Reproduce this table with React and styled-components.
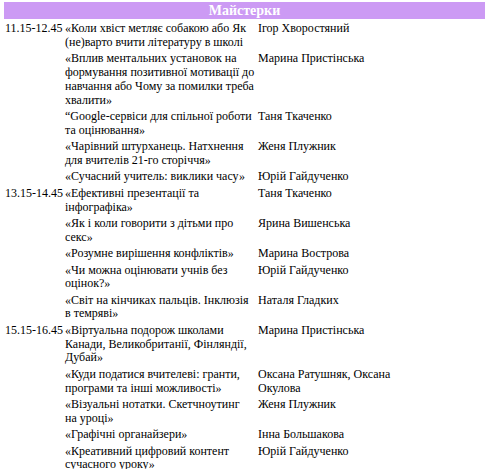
import React from "react";
import styled, { createGlobalStyle } from "styled-components";

const serif = `"Liberation Serif", "Times New Roman", serif`;

const GlobalStyle = createGlobalStyle`
  html, body {
    margin: 0;
    padding: 0;
    background: #ffffff;
  }
  body {
    font-family: ${serif};
    color: #000;
  }
`;

const Page = styled.div`
  width: 481px;
  padding: 2px 3px 0 4px;
`;

const Banner = styled.div`
  height: 17px;
  line-height: 17px;
  background: #cc9af4;
  color: #ffffff;
  font-size: 14px;
  font-weight: bold;
  text-align: center;
`;

const Schedule = styled.div`
  display: grid;
  grid-template-columns: 60px 193px 172px 1fr;
  row-gap: 2.6px;
  margin-top: 3px;
  font-size: 12px;
  line-height: 13.8px;
`;

const Cell = styled.div`
  padding: 0 1px;
  grid-column: ${p => p.col};
`;

const sessions = [
  {
    time: "11.15-12.45",
    items: [
      ["«Коли хвіст метляє собакою або Як (не)варто вчити літературу в школі", "Ігор Хворостяний"],
      ["«Вплив ментальних установок на формування позитивної мотивації до навчання або Чому за помилки треба хвалити»", "Марина Пристінська"],
      ["“Google-сервіси для спільної роботи та оцінювання»", "Таня Ткаченко"],
      ["«Чарівний штурханець. Натхнення для вчителів 21-го сторіччя»", "Женя Плужник"],
      ["«Сучасний учитель: виклики часу»", "Юрій Гайдученко"]
    ]
  },
  {
    time: "13.15-14.45",
    items: [
      ["«Ефективні презентації та інфографіка»", "Таня Ткаченко"],
      ["«Як і коли говорити з дітьми про секс»", "Ярина Вишенська"],
      ["«Розумне вирішення конфліктів»", "Марина Вострова"],
      ["«Чи можна оцінювати учнів без оцінок?»", "Юрій Гайдученко"],
      ["«Світ на кінчиках пальців. Інклюзія в темряві»", "Наталя Гладких"]
    ]
  },
  {
    time: "15.15-16.45",
    items: [
      ["«Віртуальна подорож школами Канади, Великобританії, Фінляндії, Дубай»", "Марина Пристінська"],
      ["«Куди податися вчителеві: гранти, програми та інші можливості»", "Оксана Ратушняк, Оксана Окулова"],
      ["«Візуальні нотатки. Скетчноутинг на\u00a0уроці»", "Женя Плужник"],
      ["«Графічні органайзери»", "Інна Большакова"],
      ["«Креативний цифровий контент сучасного уроку»", "Юрій Гайдученко"]
    ]
  }
];

const App = () => (
  <Page>
    <GlobalStyle />
    <Banner>Майстерки</Banner>
    <Schedule>
      {sessions.map(s =>
        s.items.map(([title, who], i) => (
          <React.Fragment key={s.time + i}>
            <Cell col={1}>{i === 0 ? s.time : ""}</Cell>
            <Cell col={2}>{title}</Cell>
            <Cell col={3}>{who}</Cell>
          </React.Fragment>
        ))
      )}
    </Schedule>
  </Page>
);

export default App;
